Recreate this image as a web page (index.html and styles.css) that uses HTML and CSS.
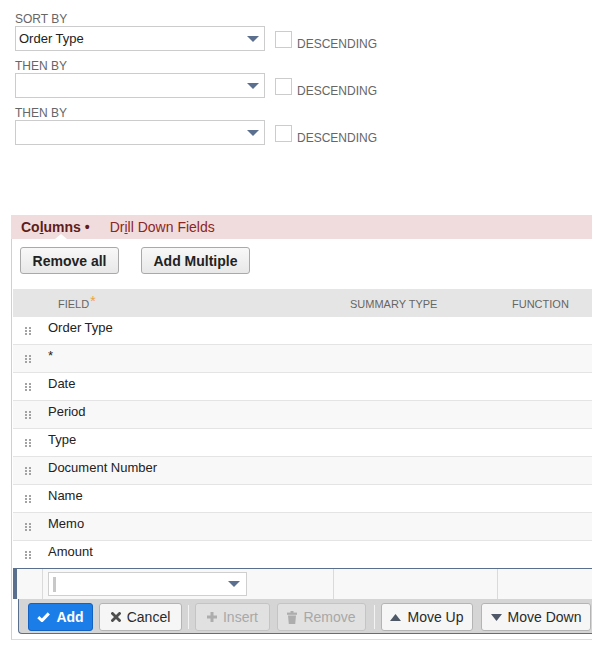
FILE: index.html
```html
<!DOCTYPE html>
<html>
<head>
<meta charset="utf-8">
<link rel="stylesheet" href="styles.css">
</head>
<body>
<div class="sort">
  <div class="group">
    <div class="lbl">SORT BY</div>
    <div class="line">
      <div class="select"><span class="val">Order Type</span><span class="arrow"></span></div>
      <span class="chk"></span><span class="desc">DESCENDING</span>
    </div>
  </div>
  <div class="group">
    <div class="lbl">THEN BY</div>
    <div class="line">
      <div class="select"><span class="val"></span><span class="arrow"></span></div>
      <span class="chk"></span><span class="desc">DESCENDING</span>
    </div>
  </div>
  <div class="group">
    <div class="lbl">THEN BY</div>
    <div class="line">
      <div class="select"><span class="val"></span><span class="arrow"></span></div>
      <span class="chk"></span><span class="desc">DESCENDING</span>
    </div>
  </div>
</div>

<div class="tabs">
  <span class="tab active">Co<u>l</u>umns •</span>
  <span class="tab">Dr<u>i</u>ll Down Fields</span>
</div>

<div class="panel">
  <div class="tools">
    <button class="btn b1">Remove all</button>
    <button class="btn b2">Add Multiple</button>
  </div>
  <div class="table">
    <div class="row head">
      <div></div>
      <div class="hc">FIELD<span class="req">*</span></div>
      <div class="hc hs">SUMMARY TYPE</div>
      <div class="hc hf">FUNCTION</div>
    </div>
    <div class="row"><div class="hd"><svg width="6" height="8" viewBox="0 0 6 8"><g fill="#a3a3a3"><rect x="0" y="0" width="2" height="2"/><rect x="4" y="0" width="2" height="2"/><rect x="0" y="3" width="2" height="2"/><rect x="4" y="3" width="2" height="2"/><rect x="0" y="6" width="2" height="2"/><rect x="4" y="6" width="2" height="2"/></g></svg></div><div class="fc">Order Type</div><div></div><div></div></div>
    <div class="row"><div class="hd"><svg width="6" height="8" viewBox="0 0 6 8"><g fill="#a3a3a3"><rect x="0" y="0" width="2" height="2"/><rect x="4" y="0" width="2" height="2"/><rect x="0" y="3" width="2" height="2"/><rect x="4" y="3" width="2" height="2"/><rect x="0" y="6" width="2" height="2"/><rect x="4" y="6" width="2" height="2"/></g></svg></div><div class="fc">*</div><div></div><div></div></div>
    <div class="row"><div class="hd"><svg width="6" height="8" viewBox="0 0 6 8"><g fill="#a3a3a3"><rect x="0" y="0" width="2" height="2"/><rect x="4" y="0" width="2" height="2"/><rect x="0" y="3" width="2" height="2"/><rect x="4" y="3" width="2" height="2"/><rect x="0" y="6" width="2" height="2"/><rect x="4" y="6" width="2" height="2"/></g></svg></div><div class="fc">Date</div><div></div><div></div></div>
    <div class="row"><div class="hd"><svg width="6" height="8" viewBox="0 0 6 8"><g fill="#a3a3a3"><rect x="0" y="0" width="2" height="2"/><rect x="4" y="0" width="2" height="2"/><rect x="0" y="3" width="2" height="2"/><rect x="4" y="3" width="2" height="2"/><rect x="0" y="6" width="2" height="2"/><rect x="4" y="6" width="2" height="2"/></g></svg></div><div class="fc">Period</div><div></div><div></div></div>
    <div class="row"><div class="hd"><svg width="6" height="8" viewBox="0 0 6 8"><g fill="#a3a3a3"><rect x="0" y="0" width="2" height="2"/><rect x="4" y="0" width="2" height="2"/><rect x="0" y="3" width="2" height="2"/><rect x="4" y="3" width="2" height="2"/><rect x="0" y="6" width="2" height="2"/><rect x="4" y="6" width="2" height="2"/></g></svg></div><div class="fc">Type</div><div></div><div></div></div>
    <div class="row"><div class="hd"><svg width="6" height="8" viewBox="0 0 6 8"><g fill="#a3a3a3"><rect x="0" y="0" width="2" height="2"/><rect x="4" y="0" width="2" height="2"/><rect x="0" y="3" width="2" height="2"/><rect x="4" y="3" width="2" height="2"/><rect x="0" y="6" width="2" height="2"/><rect x="4" y="6" width="2" height="2"/></g></svg></div><div class="fc">Document Number</div><div></div><div></div></div>
    <div class="row"><div class="hd"><svg width="6" height="8" viewBox="0 0 6 8"><g fill="#a3a3a3"><rect x="0" y="0" width="2" height="2"/><rect x="4" y="0" width="2" height="2"/><rect x="0" y="3" width="2" height="2"/><rect x="4" y="3" width="2" height="2"/><rect x="0" y="6" width="2" height="2"/><rect x="4" y="6" width="2" height="2"/></g></svg></div><div class="fc">Name</div><div></div><div></div></div>
    <div class="row"><div class="hd"><svg width="6" height="8" viewBox="0 0 6 8"><g fill="#a3a3a3"><rect x="0" y="0" width="2" height="2"/><rect x="4" y="0" width="2" height="2"/><rect x="0" y="3" width="2" height="2"/><rect x="4" y="3" width="2" height="2"/><rect x="0" y="6" width="2" height="2"/><rect x="4" y="6" width="2" height="2"/></g></svg></div><div class="fc">Memo</div><div></div><div></div></div>
    <div class="row last"><div class="hd"><svg width="6" height="8" viewBox="0 0 6 8"><g fill="#a3a3a3"><rect x="0" y="0" width="2" height="2"/><rect x="4" y="0" width="2" height="2"/><rect x="0" y="3" width="2" height="2"/><rect x="4" y="3" width="2" height="2"/><rect x="0" y="6" width="2" height="2"/><rect x="4" y="6" width="2" height="2"/></g></svg></div><div class="fc">Amount</div><div></div><div></div></div>

    <div class="edit">
      <div></div>
      <div class="ecell">
        <div class="eselect"><span class="caret"></span><span class="arrow"></span></div>
      </div>
      <div></div>
      <div></div>
    </div>

    <div class="bar">
      <button class="tb add"><svg width="13" height="10" viewBox="0 0 13 10"><path d="M1.3 5.2 L5 8.6 L11.8 1.4" fill="none" stroke="#fff" stroke-width="3"/></svg><span>Add</span></button>
      <button class="tb cancel"><svg width="10" height="10" viewBox="0 0 10 10"><path d="M1.5 1.5 L8.5 8.5 M8.5 1.5 L1.5 8.5" stroke="#4f4f4f" stroke-width="2.8" stroke-linecap="square"/></svg><span>Cancel</span></button>
      <span class="sep"></span>
      <button class="tb dis insert"><svg width="10" height="10" viewBox="0 0 10 10"><path d="M5 0 V10 M0 5 H10" stroke="#adadad" stroke-width="3"/></svg><span>Insert</span></button>
      <button class="tb dis remove"><svg width="10" height="13" viewBox="0 0 10 13"><g fill="#adadad"><rect x="0" y="1.6" width="10" height="2.2"/><rect x="3.5" y="0" width="3" height="2"/><path d="M1 4.6 H9 L8.2 13 H1.8 Z"/></g></svg><span>Remove</span></button>
      <span class="sep sep2"></span>
      <button class="tb up"><svg width="11" height="7" viewBox="0 0 11 7"><path d="M0 7 L5.5 0 L11 7 Z" fill="#4e5866"/></svg><span>Move Up</span></button>
      <button class="tb down"><svg width="11" height="7" viewBox="0 0 11 7"><path d="M0 0 L11 0 L5.5 7 Z" fill="#4e5866"/></svg><span>Move Down</span></button>
    </div>
  </div>
</div>
</body>
</html>
```

FILE: styles.css
```css
* { box-sizing: border-box; }
html, body { margin: 0; padding: 0; }
body {
  width: 592px;
  height: 649px;
  overflow: hidden;
  background: #fff;
  font-family: "Liberation Sans", Arial, sans-serif;
  color: #333;
}

/* sort section */
.sort { height: 215px; padding: 13px 0 0 15px; }
.group { margin-bottom: 9px; }
.lbl { font-size: 12px; line-height: 13px; color: #666; }
.line { display: flex; align-items: flex-start; height: 25px; }
.select {
  width: 250px; height: 25px;
  border: 1px solid #ccc;
  display: flex; align-items: center; justify-content: space-between;
  padding: 0 5px 0 3px;
  font-size: 13px; color: #222;
}
.arrow {
  width: 0; height: 0;
  border-left: 6.5px solid transparent;
  border-right: 6.5px solid transparent;
  border-top: 6px solid #5b6f8f;
}
.chk { width: 17px; height: 17px; border: 1px solid #ccc; margin: 5px 0 0 10px; }
.desc { font-size: 12px; line-height: 14px; margin: 11px 0 0 5px; color: #666; }

/* tabs */
.tabs {
  margin-left: 11px;
  height: 24px;
  background: #f0dcdc;
  display: flex;
  gap: 20px;
  padding-left: 10px;
  font-size: 14px;
  line-height: 24px;
}
.tab { color: #8a2626; position: relative; }
.tab.active { font-weight: bold; color: #5e1d1d; }
.tab.active::after {
  content: "";
  position: absolute;
  left: 34px; bottom: 0;
  width: 0; height: 0;
  border-left: 6px solid transparent;
  border-right: 6px solid transparent;
  border-bottom: 5px solid #fff;
}

/* panel */
.panel {
  margin-left: 11px;
  border-left: 1px solid #d0d0d0;
  border-bottom: 1px solid #dcdcdc;
  padding-bottom: 5px;
}
.tools { height: 50px; padding: 8px 0 0 8px; display: flex; gap: 22px; align-items: flex-start; }
.btn {
  height: 27px; padding: 0;
  border: 1px solid #a9a9a9; border-radius: 3px;
  background: linear-gradient(#f8f8f8, #e8e8e8);
  font: bold 14px "Liberation Sans", Arial, sans-serif;
  color: #222;
}
.b1 { width: 99px; }
.b2 { width: 109px; }

.table { margin-left: 1px; }
.row {
  display: grid;
  grid-template-columns: 29px 291px 164px 1fr;
  height: 28px;
  border-bottom: 1px solid #e4e4e4;
  font-size: 13px;
  color: #222;
  background: #fff;
}
.row:nth-child(odd) { background: #f8f8f8; }
.row.head {
  background: #e5e5e5;
  border-bottom: none;
  font-size: 11px;
  color: #666;
  align-items: center;
  padding-top: 2px;
}
.hc { padding-left: 16px; }
.hs { padding-left: 17px; }
.hf { padding-left: 15px; }
.req { color: #eea23b; font-size: 14px; line-height: 0; position: relative; top: -2px; margin-left: 1px; }
.hd { padding: 10px 0 0 12px; line-height: 0; }
.fc { padding: 3px 0 0 6px; line-height: 15px; }
.row.last { border-bottom-color: #5a6e8e; }

.edit {
  display: grid;
  grid-template-columns: 25px 291px 164px 1fr;
  height: 30px;
  border-left: 4px solid #5a6e8e;
  background: #f8f8f8;
}
.edit > div + div { border-left: 1px solid #dadada; }
.ecell { padding: 3px 0 0 5px; }
.eselect {
  width: 199px; height: 24px;
  background: #fff;
  border: 1px solid #cfcfcf;
  display: flex; align-items: center; justify-content: space-between;
  padding: 0 6px 0 4px;
}
.caret { width: 3px; height: 15px; background: #c8c8c8; }

.bar {
  margin-left: 5px;
  height: 35px;
  background: #d5d5d5;
  border-left: 1px solid #5a6e8e;
  border-bottom: 1px solid #5a6e8e;
  border-bottom-left-radius: 4px;
  display: flex;
  align-items: flex-start;
  padding: 4px 0 0 9px;
}
.tb {
  height: 28px; padding: 0;
  display: flex; align-items: center; justify-content: center; gap: 6px;
  border: 1px solid #b4b4b4; border-radius: 3px;
  background: #f6f6f6;
  font: 14px "Liberation Sans", Arial, sans-serif;
  color: #2a2a2a;
}
.tb + .tb { margin-left: 6px; }
.add { width: 65px; background: #1b7de8; border-color: #1461c4; color: #fff; font-weight: bold; }
.cancel { width: 83px; }
.insert { width: 75px; }
.remove { width: 89px; margin-left: 7px !important; }
.up { width: 92px; }
.down { width: 110px; margin-left: 8px !important; }
.dis { background: #e1e1e1; border-color: #c4c4c4; color: #a8a8a8; }
.sep { width: 1px; height: 24px; margin: 2px 6px 0 6px; background: #f3f3f3; }
.sep2 { margin-left: 8px; }
```
